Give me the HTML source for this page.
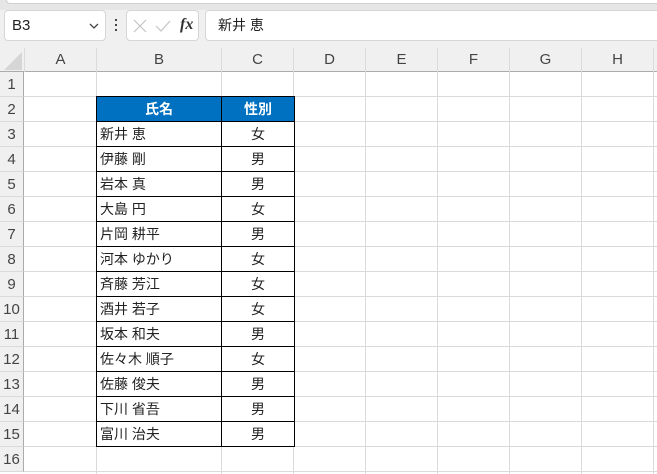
<!DOCTYPE html>
<html><head><meta charset="utf-8"><style>
*{margin:0;padding:0;box-sizing:border-box}
body{width:657px;height:474px;overflow:hidden;background:#fff;font-family:"Liberation Sans","Noto Sans CJK JP",sans-serif;position:relative}
.a{position:absolute}
.top{left:0;top:0;width:657px;height:10px;background:#e6e6e6}
.topw{left:6px;top:0;width:657px;height:4px;background:#fff;border:1px solid #d0d0d0;border-top:none;border-radius:0 0 6px 6px}
.bar{left:0;top:10px;width:657px;height:31px;background:#f0f0f0}
.box{background:#fff;border:1px solid #d6d6d6;border-radius:4px}
.hdr{left:0;top:41px;width:657px;height:31px;background:#f0f0f0;border-bottom:1px solid #ababab}
.ch{top:48px;height:24px;font-size:15px;color:#444;text-align:center;line-height:24px;border-left:1px solid #dadada}
.rh{left:0;width:24px;height:25px;background:#f0f0f0;font-size:15px;color:#444;text-align:center;line-height:25px;border-bottom:1px solid #dadada;border-right:1px solid #ababab}
.hl{position:absolute;left:24px;width:633px;height:1px;background:#dadada}
.vl{top:72px;width:1px;height:402px;background:#dadada}
table{table-layout:fixed;border-collapse:collapse;font-size:14px;color:#222}
td{border:1px solid #000;height:25px;padding:0}
td.n{padding-left:3px}
td.s{text-align:center}
</style></head><body>
<div class="a top"></div><div class="a topw"></div>
<div class="a bar"></div>
<div class="a box" style="left:4px;top:10px;width:102px;height:31px;font-size:15px;color:#222;line-height:29px;padding-left:7px">B3<svg class="a" style="left:84px;top:12px" width="10" height="7"><path d="M1 1L5 5L9 1" stroke="#444" stroke-width="1.3" fill="none"/></svg></div>
<div class="a" style="left:115px;top:19px;width:2px;height:14px;font-size:0"><div style="width:2px;height:2px;background:#444;margin-bottom:3px"></div><div style="width:2px;height:2px;background:#444;margin-bottom:3px"></div><div style="width:2px;height:2px;background:#444"></div></div>
<div class="a box" style="left:126px;top:10px;width:73px;height:31px">
<svg class="a" style="left:6px;top:8px" width="14" height="14"><path d="M1 1L13 13M13 1L1 13" stroke="#c4c4c4" stroke-width="1.2"/></svg>
<svg class="a" style="left:28px;top:8px" width="16" height="14"><path d="M1 7L6 12L15 2" stroke="#c4c4c4" stroke-width="1.2" fill="none"/></svg>
<span class="a" style="left:53px;top:5px;font-family:'Liberation Serif',serif;font-style:italic;font-weight:bold;font-size:16px;color:#333">fx</span>
</div>
<div class="a box" style="left:205px;top:10px;width:460px;height:31px;font-size:14px;color:#222;line-height:29px;padding-left:12px">新井 恵</div>
<div class="a hdr"></div>
<svg class="a" style="left:4px;top:52px" width="18" height="18"><path d="M18 0L18 18L0 18Z" fill="#d6d6d6"/></svg>
<div class="a ch" style="left:24px;width:72px">A</div>
<div class="a ch" style="left:96px;width:125px">B</div>
<div class="a ch" style="left:221px;width:72px">C</div>
<div class="a ch" style="left:293px;width:72px">D</div>
<div class="a ch" style="left:365px;width:72px">E</div>
<div class="a ch" style="left:437px;width:72px">F</div>
<div class="a ch" style="left:509px;width:72px">G</div>
<div class="a ch" style="left:581px;width:72px">H</div>
<div class="a ch" style="left:653px;width:10px"></div>
<div class="hl" style="top:96px"></div><div class="hl" style="top:121px"></div><div class="hl" style="top:146px"></div><div class="hl" style="top:171px"></div><div class="hl" style="top:196px"></div><div class="hl" style="top:221px"></div><div class="hl" style="top:246px"></div><div class="hl" style="top:271px"></div><div class="hl" style="top:296px"></div><div class="hl" style="top:321px"></div><div class="hl" style="top:346px"></div><div class="hl" style="top:371px"></div><div class="hl" style="top:396px"></div><div class="hl" style="top:421px"></div><div class="hl" style="top:446px"></div><div class="hl" style="top:471px"></div>
<div class="a vl" style="left:96px"></div><div class="a vl" style="left:221px"></div><div class="a vl" style="left:293px"></div><div class="a vl" style="left:365px"></div><div class="a vl" style="left:437px"></div><div class="a vl" style="left:509px"></div><div class="a vl" style="left:581px"></div><div class="a vl" style="left:653px"></div>
<div class="a rh" style="top:72px">1</div><div class="a rh" style="top:97px">2</div><div class="a rh" style="top:122px">3</div><div class="a rh" style="top:147px">4</div><div class="a rh" style="top:172px">5</div><div class="a rh" style="top:197px">6</div><div class="a rh" style="top:222px">7</div><div class="a rh" style="top:247px">8</div><div class="a rh" style="top:272px">9</div><div class="a rh" style="top:297px">10</div><div class="a rh" style="top:322px">11</div><div class="a rh" style="top:347px">12</div><div class="a rh" style="top:372px">13</div><div class="a rh" style="top:397px">14</div><div class="a rh" style="top:422px">15</div><div class="a rh" style="top:447px">16</div>
<table class="a" style="left:96px;top:96px;width:198px;background:#fff">
<colgroup><col style="width:125px"><col style="width:73px"></colgroup>
<tr style="background:#0070c0;color:#fff;font-weight:bold"><td class="s">氏名</td><td class="s">性別</td></tr>
<tr><td class="n">新井 恵</td><td class="s">女</td></tr>
<tr><td class="n">伊藤 剛</td><td class="s">男</td></tr>
<tr><td class="n">岩本 真</td><td class="s">男</td></tr>
<tr><td class="n">大島 円</td><td class="s">女</td></tr>
<tr><td class="n">片岡 耕平</td><td class="s">男</td></tr>
<tr><td class="n">河本 ゆかり</td><td class="s">女</td></tr>
<tr><td class="n">斉藤 芳江</td><td class="s">女</td></tr>
<tr><td class="n">酒井 若子</td><td class="s">女</td></tr>
<tr><td class="n">坂本 和夫</td><td class="s">男</td></tr>
<tr><td class="n">佐々木 順子</td><td class="s">女</td></tr>
<tr><td class="n">佐藤 俊夫</td><td class="s">男</td></tr>
<tr><td class="n">下川 省吾</td><td class="s">男</td></tr>
<tr><td class="n">富川 治夫</td><td class="s">男</td></tr>
</table>
</body></html>
